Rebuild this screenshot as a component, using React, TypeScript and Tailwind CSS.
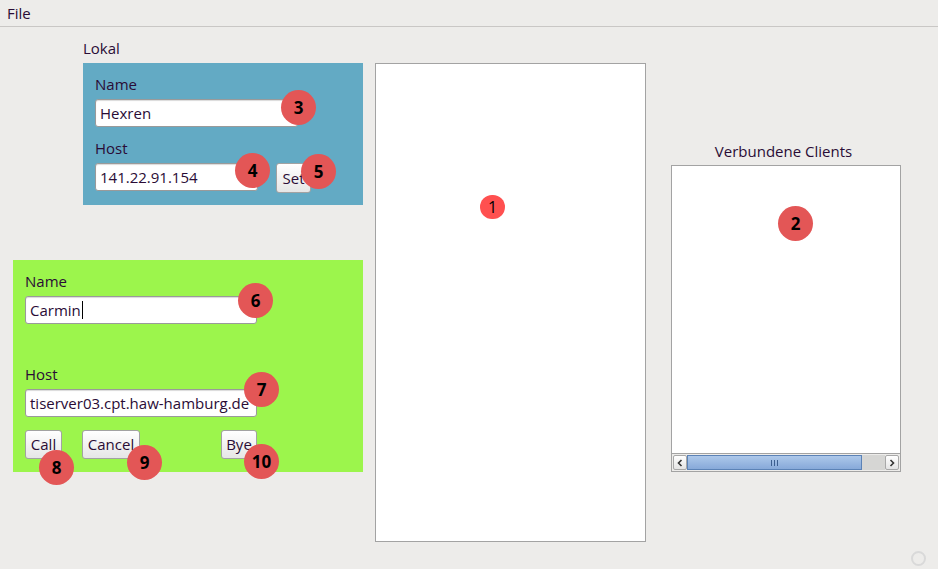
import React from 'react';

/* ── Small building blocks for the Swing-like window ── */

const font = { fontFamily: '"Open Sans", "DejaVu Sans", sans-serif' };

function Badge({ n, className }: { n: string; className: string }) {
  return (
    <div
      className={`absolute w-[35px] h-[35px] rounded-full bg-[#e35656] flex items-center justify-center text-[17px] font-bold text-black leading-none ${className}`}
    >
      {n}
    </div>
  );
}

function Field({ value, className, caret }: { value: string; className: string; caret?: boolean }) {
  return (
    <div
      className={`h-[28px] bg-white border border-[#9a9a9a] rounded-[3px] shadow-[inset_0_1px_1px_rgba(0,0,0,0.15)] flex items-center pl-[4px] text-[15px] text-[#2a0c36] overflow-hidden whitespace-nowrap ${className}`}
    >
      {value}
      {caret && <span className="inline-block w-px h-[18px] bg-black ml-px" />}
    </div>
  );
}

function Btn({ label, className }: { label: string; className: string }) {
  return (
    <div
      className={`h-[29px] rounded-[3px] border border-[#a2a2a2] bg-gradient-to-b from-white to-[#e6e6e6] flex items-center justify-center text-[15px] text-[#2a0c36] ${className}`}
    >
      {label}
    </div>
  );
}

export default function App() {
  return (
    <div className="w-[938px] h-[569px] bg-[#edecea] relative overflow-hidden text-[#2a0c36]" style={font}>
      {/* ── Menu bar ── */}
      <div className="h-[27px] border-b border-[#c9c7c5] bg-[#edecea] flex items-center pl-[7px] text-[15px]">
        File
      </div>

      <div className="flex items-start">
        {/* ── Left column ── */}
        <div className="w-[363px] flex flex-col">
          <div className="ml-[83px] mt-[11px] h-[20px] leading-[20px] text-[15px]">Lokal</div>

          <div className="relative ml-[83px] mt-[5px] w-[280px] h-[142px] bg-[#63aac4] pl-[12px] pt-[11px]">
            <div className="h-[20px] leading-[20px] text-[15px]">Name</div>
            <Field value="Hexren" className="mt-[5px] w-[203px]" />
            <div className="mt-[11px] h-[20px] leading-[20px] text-[15px]">Host</div>
            <div className="mt-[5px] flex items-start">
              <Field value="141.22.91.154" className="w-[163px]" />
              <Btn label="Set" className="ml-[18px] w-[35px] h-[30px]" />
            </div>
            <Badge n="3" className="left-[198px] top-[27px]" />
            <Badge n="4" className="left-[152px] top-[90px]" />
            <Badge n="5" className="left-[218px] top-[91px]" />
          </div>

          <div className="relative ml-[13px] mt-[55px] w-[350px] h-[212px] bg-[#9cf54c] pl-[12px] pt-[11px]">
            <div className="h-[20px] leading-[20px] text-[15px]">Name</div>
            <Field value="Carmin" caret className="mt-[5px] w-[232px] h-[27px]" />
            <div className="mt-[40px] h-[20px] leading-[20px] text-[15px]">Host</div>
            <Field value="tiserver03.cpt.haw-hamburg.de" className="mt-[5px] w-[232px] h-[27px]" />
            <div className="mt-[13px] flex items-start w-[232px]">
              <Btn label="Call" className="w-[37px]" />
              <Btn label="Cancel" className="ml-[20px] w-[58px]" />
              <Btn label="Bye" className="ml-auto w-[36px]" />
            </div>
            <Badge n="6" className="left-[225px] top-[23px]" />
            <Badge n="7" className="left-[231px] top-[112px]" />
            <Badge n="8" className="left-[26px] top-[190px]" />
            <Badge n="9" className="left-[114px] top-[185px]" />
            <Badge n="10" className="left-[231px] top-[184px]" />
          </div>
        </div>

        {/* ── Middle panel ── */}
        <div className="relative ml-[12px] mt-[36px] w-[271px] h-[479px] bg-white border border-[#a3a3a3]">
          <div className="absolute left-[104px] top-[131px] w-[25px] h-[24px] rounded-full bg-[#ff5050] flex items-center justify-center text-[16px] text-black leading-none">
            1
          </div>
        </div>

        {/* ── Right: connected clients ── */}
        <div className="ml-[25px] mt-[114px] w-[230px] flex flex-col">
          <div className="h-[20px] leading-[20px] text-[15px] text-center pr-[5px]">Verbundene Clients</div>
          <div className="relative mt-[4px] h-[307px] bg-white border border-[#a3a3a3] flex flex-col">
            <div className="flex-1" />
            <div className="h-[18px] border-t border-[#a3a3a3] bg-[#edecea] flex items-stretch p-px">
              <div className="w-[14px] border border-[#a8a8a8] rounded-[2px] bg-gradient-to-b from-white to-[#e4e4e4] flex items-center justify-center">
                <svg width="6" height="8" viewBox="0 0 6 8">
                  <path d="M4.5 1 L1.5 4 L4.5 7" fill="none" stroke="#333" strokeWidth="1.6" />
                </svg>
              </div>
              <div className="w-[175px] border border-[#5b82b6] bg-gradient-to-b from-[#adc8ea] to-[#87a9d9] flex items-center justify-center gap-[2px]">
                <span className="w-px h-[6px] bg-[#3d5f90]" />
                <span className="w-px h-[6px] bg-[#3d5f90]" />
                <span className="w-px h-[6px] bg-[#3d5f90]" />
              </div>
              <div className="flex-1 bg-[#d6d6d4]" />
              <div className="w-[14px] border border-[#a8a8a8] rounded-[2px] bg-gradient-to-b from-white to-[#e4e4e4] flex items-center justify-center">
                <svg width="6" height="8" viewBox="0 0 6 8">
                  <path d="M1.5 1 L4.5 4 L1.5 7" fill="none" stroke="#333" strokeWidth="1.6" />
                </svg>
              </div>
            </div>
            <Badge n="2" className="left-[106px] top-[40px]" />
          </div>
        </div>
      </div>

      {/* ── Corner indicator ── */}
      <div className="absolute left-[911px] top-[551px] w-[15px] h-[15px] rounded-full border-2 border-[#d9d9d9]" />
    </div>
  );
}
